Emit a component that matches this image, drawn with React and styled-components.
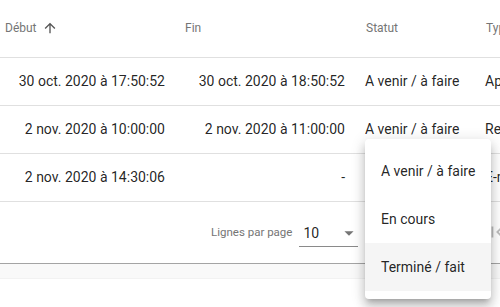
import React from 'react';
import styled, { createGlobalStyle } from 'styled-components';

const GlobalStyle = createGlobalStyle`
  html, body {
    margin: 0;
    padding: 0;
    background: #ffffff;
  }
  body {
    font-family: Roboto, "Liberation Sans", Arial, sans-serif;
    -webkit-font-smoothing: antialiased;
  }
`;

const rows = [
  { start: '30 oct. 2020 à 17:50:52', end: '30 oct. 2020 à 18:50:52', status: 'A venir / à faire', type: 'Appel' },
  { start: '2 nov. 2020 à 10:00:00', end: '2 nov. 2020 à 11:00:00', status: 'A venir / à faire', type: 'Rendez-vous' },
  { start: '2 nov. 2020 à 14:30:06', end: '-', status: '', type: 'E-mail' },
];

const statusOptions = ['A venir / à faire', 'En cours', 'Terminé / fait'];

const ArrowUp = () => (
  <svg width="16" height="16" viewBox="0 0 24 24" fill="currentColor">
    <path d="M4 12l1.41 1.41L11 7.83V20h2V7.83l5.58 5.59L20 12l-8-8-8 8z" />
  </svg>
);

const CaretDown = () => (
  <svg width="22" height="22" viewBox="0 0 24 24" fill="currentColor">
    <path d="M7 10l5 5 5-5z" />
  </svg>
);

const FirstPage = () => (
  <svg width="22" height="22" viewBox="0 0 24 24" fill="currentColor">
    <path d="M18.41 16.59L13.82 12l4.59-4.59L17 6l-6 6 6 6zM6 6h2v12H6z" />
  </svg>
);

const App = () => {
  return (
    <Page>
      <GlobalStyle />
      <Paper>
        <TableWrap>
          <Table>
            <colgroup>
              <col style={{ width: 181 }} />
              <col style={{ width: 180 }} />
              <col style={{ width: 120 }} />
              <col style={{ width: 140 }} />
            </colgroup>
            <thead>
              <tr>
                <HeadCell>
                  <SortLabel>
                    Début
                    <SortIcon>
                      <ArrowUp />
                    </SortIcon>
                  </SortLabel>
                </HeadCell>
                <HeadCell>Fin</HeadCell>
                <HeadCell>Statut</HeadCell>
                <HeadCell>Type</HeadCell>
              </tr>
            </thead>
            <tbody>
              {rows.map((r, i) => (
                <tr key={i}>
                  <Cell $align="right">{r.start}</Cell>
                  <Cell $align="right">{r.end}</Cell>
                  <Cell>{r.status}</Cell>
                  <Cell>{r.type}</Cell>
                </tr>
              ))}
            </tbody>
          </Table>
        </TableWrap>

        <Pagination>
          <PageLabel>Lignes par page</PageLabel>
          <Select>
            <span>10</span>
            <SelectCaret>
              <CaretDown />
            </SelectCaret>
          </Select>
          <PageNav>
            <FirstPage />
          </PageNav>
        </Pagination>
      </Paper>
      <Band />

      <Menu>
        {statusOptions.map((opt, i) => (
          <MenuItem key={opt} $selected={i === 2}>
            {opt}
          </MenuItem>
        ))}
      </Menu>
    </Page>
  );
};

const Page = styled.div`
  position: relative;
  width: 500px;
  height: 307px;
  overflow: hidden;
  background: #fff;
`;

const Paper = styled.div`
  border-bottom: 1px solid #a4a4a4;
`;

const TableWrap = styled.div`
  width: 500px;
  overflow: hidden;
`;

const Table = styled.table`
  border-collapse: collapse;
  table-layout: fixed;
  width: 621px;
`;

const HeadCell = styled.th`
  height: 57px;
  padding: 0 16px 0 5px;
  text-align: left;
  font-size: 12px;
  font-weight: 400;
  color: #757575;
  border-bottom: 1px solid #e0e0e0;
  white-space: nowrap;
  box-sizing: border-box;

  &:nth-child(2) {
    padding-left: 4px;
  }
`;

const SortLabel = styled.span`
  display: inline-flex;
  align-items: center;
  color: #757575;
`;

const SortIcon = styled.span`
  display: inline-flex;
  margin-left: 5px;
  color: #555555;
`;

const Cell = styled.td`
  height: 47px;
  padding: 0 16px 0 4px;
  text-align: ${(p) => p.$align || 'left'};
  font-size: 14px;
  color: rgba(0, 0, 0, 0.87);
  border-bottom: 1px solid #e0e0e0;
  white-space: nowrap;
  overflow: hidden;
`;

const Pagination = styled.div`
  display: flex;
  align-items: center;
  height: 61px;
  padding-left: 211px;
  box-sizing: border-box;
`;

const PageLabel = styled.span`
  font-size: 11.5px;
  color: #757575;
  white-space: nowrap;
`;

const Select = styled.div`
  display: flex;
  align-items: center;
  justify-content: space-between;
  flex-shrink: 0;
  width: 59px;
  height: 26px;
  margin-left: 7px;
  margin-top: 3px;
  padding-left: 4px;
  box-sizing: border-box;
  border-bottom: 1px solid #8a8a8a;
  font-size: 14px;
  color: rgba(0, 0, 0, 0.87);
`;

const SelectCaret = styled.span`
  display: inline-flex;
  color: #757575;
  margin-right: -2px;
`;

const PageNav = styled.span`
  display: inline-flex;
  flex-shrink: 0;
  margin-left: 128px;
  color: #bdbdbd;
`;

const Band = styled.div`
  height: 14px;
  background: #f9f9f9;
  border-bottom: 1px solid #f2f2f2;
`;

const Menu = styled.ul`
  position: absolute;
  left: 365px;
  top: 139px;
  width: 126px;
  margin: 0;
  padding: 8px 0;
  list-style: none;
  background: #fff;
  border-radius: 4px;
  box-shadow: 0px 5px 5px -3px rgba(0, 0, 0, 0.2), 0px 8px 10px 1px rgba(0, 0, 0, 0.14),
    0px 3px 14px 2px rgba(0, 0, 0, 0.12);
`;

const MenuItem = styled.li`
  display: flex;
  align-items: center;
  height: 48px;
  padding-left: 16px;
  font-size: 14px;
  color: rgba(0, 0, 0, 0.87);
  background: ${(p) => (p.$selected ? '#f5f5f5' : 'transparent')};
`;

export default App;
